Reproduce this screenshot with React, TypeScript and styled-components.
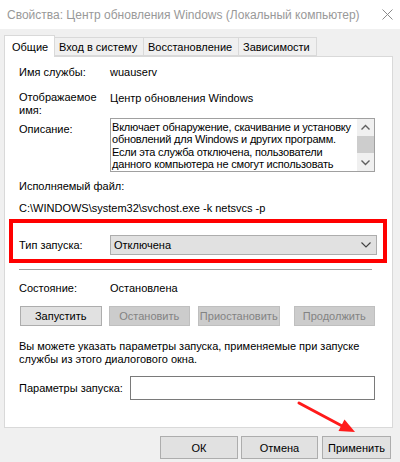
import React from "react";
import styled, { createGlobalStyle } from "styled-components";

const Global = createGlobalStyle`
  html, body { margin: 0; padding: 0; background: #f0f0f0; }
  body { font-family: "Liberation Sans", Arial, sans-serif; font-size: 11px; color: #000; }
  * { box-sizing: border-box; }
`;

const Window = styled.div`
  position: relative;
  width: 400px;
  height: 462px;
  background: #f0f0f0;
  display: flex;
  flex-direction: column;
  overflow: hidden;
`;

const TitleBar = styled.div`
  height: 29px;
  background: #ffffff;
  display: flex;
  align-items: center;
  justify-content: space-between;
  padding: 0 7px 0 7px;
  color: #999999;
  font-size: 12px;
  white-space: nowrap;
`;

const CloseIcon = styled.svg`
  width: 11px;
  height: 11px;
`;

const Body = styled.div`
  flex: 1;
  padding: 5px 7px 0 4px;
  display: flex;
  flex-direction: column;
`;

const TabStrip = styled.div`
  display: flex;
  align-items: flex-end;
  height: 22px;
  position: relative;
  z-index: 1;
`;

const Tab = styled.div<{ $active?: boolean; $w: number }>`
  width: ${(p) => p.$w}px;
  height: ${(p) => (p.$active ? "22px" : "19px")};
  margin-bottom: ${(p) => (p.$active ? "-1px" : "0")};
  padding: ${(p) => (p.$active ? "0 0 0 7px" : "1px 0 0 4px")};
  border: 1px solid #d9d9d9;
  border-bottom: ${(p) => (p.$active ? "none" : "1px solid #d9d9d9")};
  border-left: ${(p) => (p.$active ? "1px solid #d9d9d9" : "none")};
  background: ${(p) => (p.$active ? "#ffffff" : "#f0f0f0")};
  display: flex;
  align-items: center;
  white-space: nowrap;
`;

const Panel = styled.div`
  background: #ffffff;
  border: 1px solid #d9d9d9;
  height: 372px;
  padding: 8px 17px 0 14px;
  display: flex;
  flex-direction: column;
`;

const FieldRow = styled.div<{ $gap?: number }>`
  display: grid;
  grid-template-columns: 91px 1fr;
  margin-top: ${(p) => p.$gap ?? 0}px;
  line-height: 15px;
`;

const TwoLine = styled.div`
  line-height: 13px;
`;

const ValueTop = styled.div`
  line-height: 15px;
`;

const DescLabel = styled.div`
  padding-top: 4px;
`;

const DescBox = styled.div`
  height: 54px;
  border: 1px solid #a0a0a0;
  display: flex;
  overflow: hidden;
`;

const DescText = styled.div`
  flex: 1;
  padding: 2px 0 0 1px;
  line-height: 12.4px;
  letter-spacing: -0.2px;
  white-space: nowrap;
  overflow: hidden;
`;

const ScrollBar = styled.div`
  width: 17px;
  flex: none;
  background: #f0f0f0;
  display: flex;
  flex-direction: column;
  align-items: center;
`;

const ScrollArrow = styled.svg`
  width: 17px;
  height: 17px;
  flex: none;
`;

const ScrollThumb = styled.div`
  width: 17px;
  height: 17px;
  background: #cdcdcd;
  flex: none;
`;

const Spacer = styled.div`
  flex: 1;
`;

const PlainLine = styled.div<{ $gap: number }>`
  margin-top: ${(p) => p.$gap}px;
  line-height: 15px;
  white-space: nowrap;
`;

const RedFrame = styled.div`
  margin: 3.5px 0 0 -10px;
  width: 378px;
  height: 44px;
  border: 4px solid #ff0000;
  padding: 7px 7px 0 6px;
  display: grid;
  grid-template-columns: 91px 1fr;
  align-items: center;
`;

const Select = styled.div`
  height: 20px;
  width: 267px;
  background: #e1e1e1;
  border: 1px solid #adadad;
  display: flex;
  align-items: center;
  justify-content: space-between;
  padding: 0 5px 0 3px;
`;

const Chevron = styled.svg`
  width: 10px;
  height: 6px;
`;

const Separator = styled.div`
  margin-top: 6px;
  height: 1px;
  width: 353px;
  background: #a0a0a0;
`;

const ButtonRow = styled.div`
  margin-top: 10.5px;
  display: flex;
  gap: 7px;
  padding-left: 1px;
`;

const Btn = styled.div<{ $disabled?: boolean; $ml?: number }>`
  width: 82px;
  height: 20px;
  margin-left: ${(p) => p.$ml ?? 0}px;
  background: ${(p) => (p.$disabled ? "#cccccc" : "#e1e1e1")};
  border: 1px solid ${(p) => (p.$disabled ? "#bfbfbf" : "#adadad")};
  color: ${(p) => (p.$disabled ? "#838383" : "#000000")};
  display: flex;
  align-items: center;
  justify-content: center;
  white-space: nowrap;
`;

const InfoText = styled.div`
  margin-top: 13.5px;
  line-height: 13px;
  white-space: nowrap;
`;

const ParamsRow = styled.div`
  margin-top: 10.5px;
  display: flex;
  align-items: center;
`;

const ParamsLabel = styled.div`
  width: 111px;
  white-space: nowrap;
`;

const TextInput = styled.div`
  width: 246px;
  height: 24px;
  background: #ffffff;
  border: 1px solid #7a7a7a;
`;

const Footer = styled.div`
  display: flex;
  justify-content: flex-end;
  padding: 8px 2px 0 0;
`;

const FooterBtn = styled.div<{ $w: number; $ml?: number }>`
  width: ${(p) => p.$w}px;
  margin-left: ${(p) => p.$ml ?? 0}px;
  height: 23px;
  background: #e1e1e1;
  border: 1px solid #adadad;
  display: flex;
  align-items: center;
  justify-content: center;
`;

const Arrow = styled.svg`
  position: absolute;
  left: 0;
  top: 0;
  width: 400px;
  height: 462px;
  pointer-events: none;
`;

const UpDown = ({ up }: { up?: boolean }) => (
  <ScrollArrow viewBox="0 0 17 17">
    <path
      d={up ? "M4.5 10.5 L8.5 6.5 L12.5 10.5" : "M4.5 6.5 L8.5 10.5 L12.5 6.5"}
      fill="none"
      stroke="#606060"
      strokeWidth="1.4"
    />
  </ScrollArrow>
);

export default function App() {
  return (
    <Window>
      <Global />
      <TitleBar>
        <span>Свойства: Центр обновления Windows (Локальный компьютер)</span>
        <CloseIcon viewBox="0 0 11 11">
          <path d="M0.5 0.5 L10.5 10.5 M10.5 0.5 L0.5 10.5" stroke="#8a8a8a" strokeWidth="1" />
        </CloseIcon>
      </TitleBar>
      <Body>
        <TabStrip>
          <Tab $active $w={51}>Общие</Tab>
          <Tab $w={89}>Вход в систему</Tab>
          <Tab $w={95}>Восстановление</Tab>
          <Tab $w={78}>Зависимости</Tab>
        </TabStrip>
        <Panel>
          <FieldRow>
            <div>Имя службы:</div>
            <div>wuauserv</div>
          </FieldRow>
          <FieldRow $gap={10.5}>
            <TwoLine>
              Отображаемое
              <br />
              имя:
            </TwoLine>
            <ValueTop>Центр обновления Windows</ValueTop>
          </FieldRow>
          <FieldRow $gap={1.5}>
            <DescLabel>Описание:</DescLabel>
            <DescBox>
              <DescText>
                Включает обнаружение, скачивание и установку
                <br />
                обновлений для Windows и других программ.
                <br />
                Если эта служба отключена, пользователи
                <br />
                данного компьютера не смогут использовать
              </DescText>
              <ScrollBar>
                <UpDown up />
                <ScrollThumb />
                <Spacer />
                <UpDown />
              </ScrollBar>
            </DescBox>
          </FieldRow>
          <PlainLine $gap={6.5}>Исполняемый файл:</PlainLine>
          <PlainLine $gap={7}>C:\WINDOWS\system32\svchost.exe -k netsvcs -p</PlainLine>
          <RedFrame>
            <div>Тип запуска:</div>
            <Select>
              <span>Отключена</span>
              <Chevron viewBox="0 0 10 6">
                <path d="M0.5 0.5 L5 5 L9.5 0.5" fill="none" stroke="#404040" strokeWidth="1.1" />
              </Chevron>
            </Select>
          </RedFrame>
          <Separator />
          <FieldRow $gap={10.5}>
            <div>Состояние:</div>
            <div>Остановлена</div>
          </FieldRow>
          <ButtonRow>
            <Btn>Запустить</Btn>
            <Btn $disabled>Остановить</Btn>
            <Btn $disabled $ml={1}>Приостановить</Btn>
            <Btn $disabled $ml={7}>Продолжить</Btn>
          </ButtonRow>
          <InfoText>
            Вы можете указать параметры запуска, применяемые при запуске
            <br />
            службы из этого диалогового окна.
          </InfoText>
          <ParamsRow>
            <ParamsLabel>Параметры запуска:</ParamsLabel>
            <TextInput />
          </ParamsRow>
        </Panel>
        <Footer>
          <FooterBtn $w={78}>ОК</FooterBtn>
          <FooterBtn $w={77} $ml={3}>Отмена</FooterBtn>
          <FooterBtn $w={69} $ml={4}>Применить</FooterBtn>
        </Footer>
      </Body>
      <Arrow viewBox="0 0 400 462">
        <line x1="299" y1="403" x2="344" y2="427" stroke="#ff1a1a" strokeWidth="3" strokeLinecap="round" />
        <polygon points="355,432 338.5,431 344.5,419.5" fill="#ff1a1a" />
      </Arrow>
    </Window>
  );
}
